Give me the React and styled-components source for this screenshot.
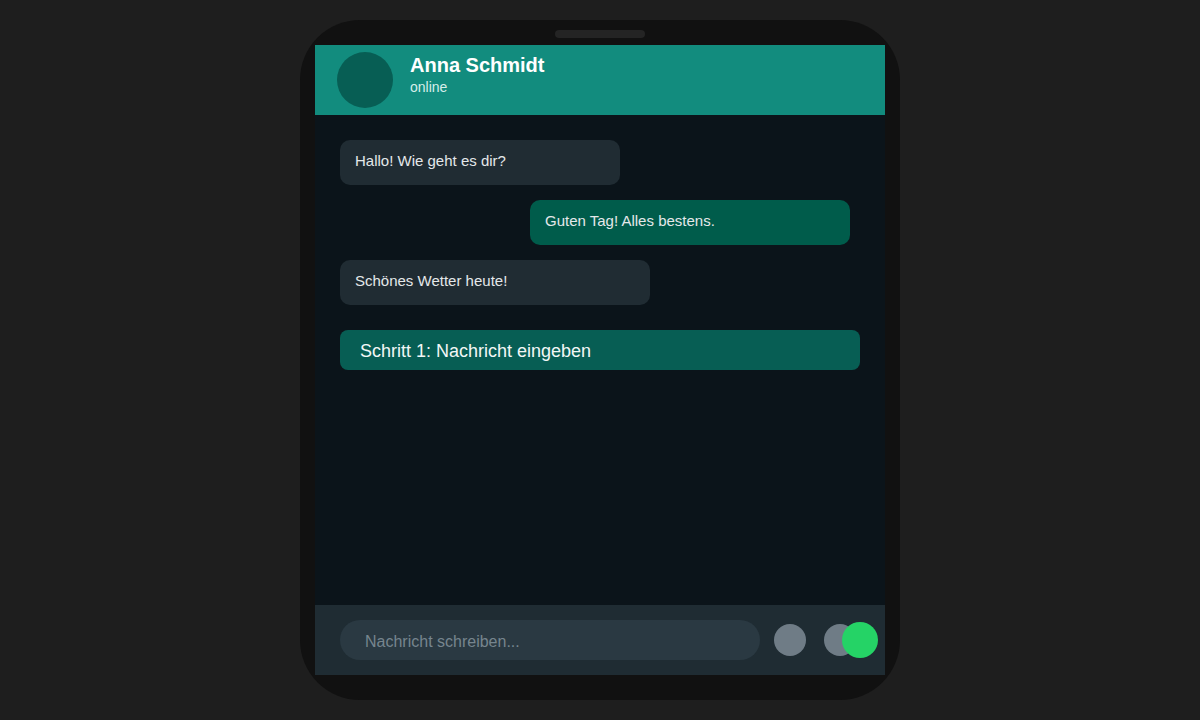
import React from "react"
import styled, { createGlobalStyle } from "styled-components"

const GlobalStyle = createGlobalStyle`
  * { box-sizing: border-box; }
  body {
    margin: 0;
    background: #1e1e1e;
    font-family: "Liberation Sans", Arial, sans-serif;
  }
`

const Stage = styled.div`
  width: 1200px;
  height: 720px;
  display: flex;
  justify-content: center;
  padding-top: 20px;
`

const Phone = styled.div`
  width: 600px;
  height: 680px;
  background: #111111;
  border-radius: 60px;
  padding: 10px 15px 25px;
  display: flex;
  flex-direction: column;
  align-items: center;
`

const Notch = styled.div`
  width: 90px;
  height: 8px;
  border-radius: 4px;
  background: #242424;
  margin-bottom: 7px;
`

const Screen = styled.div`
  width: 570px;
  flex: 1;
  display: flex;
  flex-direction: column;
  background: #0b141a;
`

const Header = styled.header`
  height: 70px;
  background: #128c7e;
  display: flex;
  align-items: flex-start;
  padding: 7px 22px;
`

const Avatar = styled.div`
  width: 56px;
  height: 56px;
  border-radius: 50%;
  background: #075e54;
  margin-right: 17px;
`

const Contact = styled.div`
  display: flex;
  flex-direction: column;
  margin-top: 1px;
`

const Name = styled.div`
  font-size: 20px;
  line-height: 24px;
  font-weight: bold;
  color: #ffffff;
`

const Status = styled.div`
  font-size: 14px;
  line-height: 20px;
  color: #d6eeea;
`

const Messages = styled.main`
  flex: 1;
  display: flex;
  flex-direction: column;
  padding: 25px 25px;
`

const Bubble = styled.div`
  width: ${p => p.$width}px;
  height: 45px;
  align-self: ${p => (p.$out ? "flex-end" : "flex-start")};
  margin-right: ${p => (p.$out ? "10px" : "0")};
  background: ${p => (p.$out ? "#005c4b" : "#202c33")};
  color: #e4e8ea;
  font-size: 15px;
  line-height: 20px;
  padding: 11px 15px 14px;
  border-radius: 10px;
  margin-bottom: 15px;
`

const Step = styled.div`
  margin-top: 10px;
  height: 40px;
  background: #075e54;
  border-radius: 8px;
  color: #f2f7f6;
  font-size: 18px;
  line-height: 20px;
  padding: 11px 20px 9px;
`

const InputBar = styled.footer`
  height: 70px;
  background: #1f2c33;
  display: flex;
  align-items: center;
  padding: 0 25px;
`

const Input = styled.div`
  width: 420px;
  height: 40px;
  border-radius: 20px;
  background: #2a3942;
  color: #76858e;
  font-size: 16px;
  line-height: 38px;
  padding: 3px 25px 0;
  margin-right: 14px;
`

const Buttons = styled.div`
  display: flex;
  gap: 18px;
`

const RoundButton = styled.div`
  position: relative;
  width: 32px;
  height: 32px;
  border-radius: 50%;
  background: #6f7c86;
`

const Highlight = styled.div`
  position: absolute;
  left: 18px;
  top: -2px;
  width: 36px;
  height: 36px;
  border-radius: 50%;
  background: #25d366;
`

const messages = [
  { text: "Hallo! Wie geht es dir?", width: 280 },
  { text: "Guten Tag! Alles bestens.", width: 320, out: true },
  { text: "Schönes Wetter heute!", width: 310 },
]

export default function App() {
  return (
    <>
      <GlobalStyle />
      <Stage>
        <Phone>
          <Notch />
          <Screen>
            <Header>
              <Avatar />
              <Contact>
                <Name>Anna Schmidt</Name>
                <Status>online</Status>
              </Contact>
            </Header>
            <Messages>
              {messages.map((m, i) => (
                <Bubble key={i} $width={m.width} $out={m.out}>
                  {m.text}
                </Bubble>
              ))}
              <Step>Schritt 1: Nachricht eingeben</Step>
            </Messages>
            <InputBar>
              <Input>Nachricht schreiben...</Input>
              <Buttons>
                <RoundButton />
                <RoundButton>
                  <Highlight />
                </RoundButton>
              </Buttons>
            </InputBar>
          </Screen>
        </Phone>
      </Stage>
    </>
  )
}
